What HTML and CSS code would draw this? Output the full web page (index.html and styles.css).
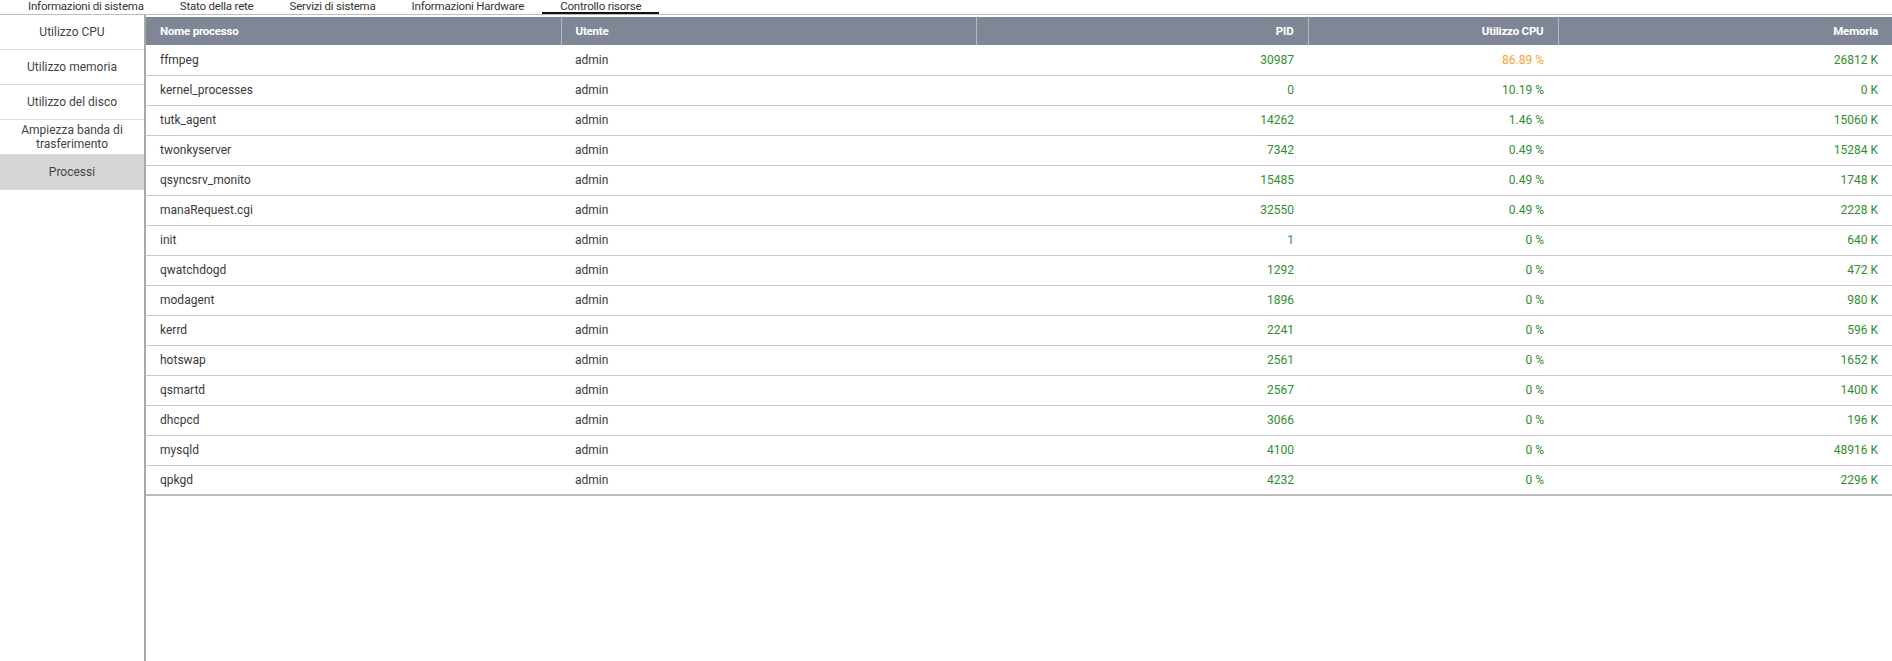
FILE: index.html
```html
<!DOCTYPE html>
<html lang="it">
<head>
  <meta charset="UTF-8" />
  <title>Controllo risorse</title>
  <link rel="stylesheet" href="styles.css">
</head>
<body>
  <div class="tabs">
    <div class="tab">Informazioni di sistema</div>
    <div class="tab">Stato della rete</div>
    <div class="tab">Servizi di sistema</div>
    <div class="tab">Informazioni Hardware</div>
    <div class="tab active">Controllo risorse</div>
  </div>

  <div class="main">
    <div class="sidebar">
      <div class="side-item">Utilizzo CPU</div>
      <div class="side-item">Utilizzo memoria</div>
      <div class="side-item">Utilizzo del disco</div>
      <div class="side-item">Ampiezza banda di trasferimento</div>
      <div class="side-item selected">Processi</div>
    </div>

    <div class="content">
      <table class="proc-table">
        <colgroup>
          <col style="width:415px">
          <col style="width:415px">
          <col style="width:332px">
          <col style="width:250px">
          <col>
        </colgroup>
        <thead>
          <tr>
            <th>Nome processo</th>
            <th>Utente</th>
            <th class="num">PID</th>
            <th class="num">Utilizzo CPU</th>
            <th class="num">Memoria</th>
          </tr>
        </thead>
        <tbody>
          <tr><td>ffmpeg</td><td>admin</td><td class="num ok">30987</td><td class="num warn">86.89 %</td><td class="num ok">26812 K</td></tr>
          <tr><td>kernel_processes</td><td>admin</td><td class="num ok">0</td><td class="num ok">10.19 %</td><td class="num ok">0 K</td></tr>
          <tr><td>tutk_agent</td><td>admin</td><td class="num ok">14262</td><td class="num ok">1.46 %</td><td class="num ok">15060 K</td></tr>
          <tr><td>twonkyserver</td><td>admin</td><td class="num ok">7342</td><td class="num ok">0.49 %</td><td class="num ok">15284 K</td></tr>
          <tr><td>qsyncsrv_monito</td><td>admin</td><td class="num ok">15485</td><td class="num ok">0.49 %</td><td class="num ok">1748 K</td></tr>
          <tr><td>manaRequest.cgi</td><td>admin</td><td class="num ok">32550</td><td class="num ok">0.49 %</td><td class="num ok">2228 K</td></tr>
          <tr><td>init</td><td>admin</td><td class="num ok">1</td><td class="num ok">0 %</td><td class="num ok">640 K</td></tr>
          <tr><td>qwatchdogd</td><td>admin</td><td class="num ok">1292</td><td class="num ok">0 %</td><td class="num ok">472 K</td></tr>
          <tr><td>modagent</td><td>admin</td><td class="num ok">1896</td><td class="num ok">0 %</td><td class="num ok">980 K</td></tr>
          <tr><td>kerrd</td><td>admin</td><td class="num ok">2241</td><td class="num ok">0 %</td><td class="num ok">596 K</td></tr>
          <tr><td>hotswap</td><td>admin</td><td class="num ok">2561</td><td class="num ok">0 %</td><td class="num ok">1652 K</td></tr>
          <tr><td>qsmartd</td><td>admin</td><td class="num ok">2567</td><td class="num ok">0 %</td><td class="num ok">1400 K</td></tr>
          <tr><td>dhcpcd</td><td>admin</td><td class="num ok">3066</td><td class="num ok">0 %</td><td class="num ok">196 K</td></tr>
          <tr><td>mysqld</td><td>admin</td><td class="num ok">4100</td><td class="num ok">0 %</td><td class="num ok">48916 K</td></tr>
          <tr><td>qpkgd</td><td>admin</td><td class="num ok">4232</td><td class="num ok">0 %</td><td class="num ok">2296 K</td></tr>
        </tbody>
      </table>
    </div>
  </div>
</body>
</html>
```

FILE: styles.css
```css
:root {
  --head-bg: #7f8796;
  --line: #c9c9c9;
  --green: #2f8f2f;
  --orange: #f2a32a;
  --text: #3a3a3a;
}
* {
  box-sizing: border-box;
}
html, body {
  height: 100%;
}
body {
  margin: 0;
  background: #fff;
  color: var(--text);
  font-family: Roboto, "Liberation Sans", sans-serif;
  font-size: 12px;
  display: flex;
  flex-direction: column;
}
.tabs {
  display: flex;
  padding-left: 10px;
  height: 15px;
  border-bottom: 1px solid #bdbdbd;
}
.tab {
  padding: 0 18px;
  height: 14px;
  line-height: 12px;
  font-size: 11.5px;
  letter-spacing: -0.2px;
  color: #333;
  white-space: nowrap;
}
.tab.active {
  border-bottom: 2px solid #111;
}
.main {
  flex: 1;
  display: flex;
}
.sidebar {
  width: 144px;
  flex-shrink: 0;
}
.side-item {
  height: 35px;
  display: flex;
  align-items: center;
  justify-content: center;
  text-align: center;
  line-height: 14px;
  padding: 0 8px;
  border-bottom: 1px solid #dcdcdc;
  color: #444;
}
.side-item.selected {
  background: #d6d6d6;
}
.content {
  flex: 1;
  border-left: 2px solid #a8a8a8;
  padding-top: 2px;
}
.proc-table {
  width: 100%;
  border-collapse: collapse;
  table-layout: fixed;
  border-bottom: 2px solid #bcbcbc;
}
.proc-table th {
  background: var(--head-bg);
  color: #fff;
  font-weight: 700;
  font-size: 11.5px;
  letter-spacing: -0.2px;
  text-align: left;
  height: 28px;
  padding: 0 14px;
  border-left: 1px solid #b3b8c2;
}
.proc-table th:first-child {
  border-left: none;
}
.proc-table td {
  height: 30px;
  padding: 0 14px;
  border-top: 1px solid var(--line);
  white-space: nowrap;
}
.proc-table tbody tr:first-child td {
  border-top: none;
}
.num {
  text-align: right;
}
.proc-table th.num {
  text-align: right;
}
.ok {
  color: var(--green);
}
.warn {
  color: var(--orange);
}
```
